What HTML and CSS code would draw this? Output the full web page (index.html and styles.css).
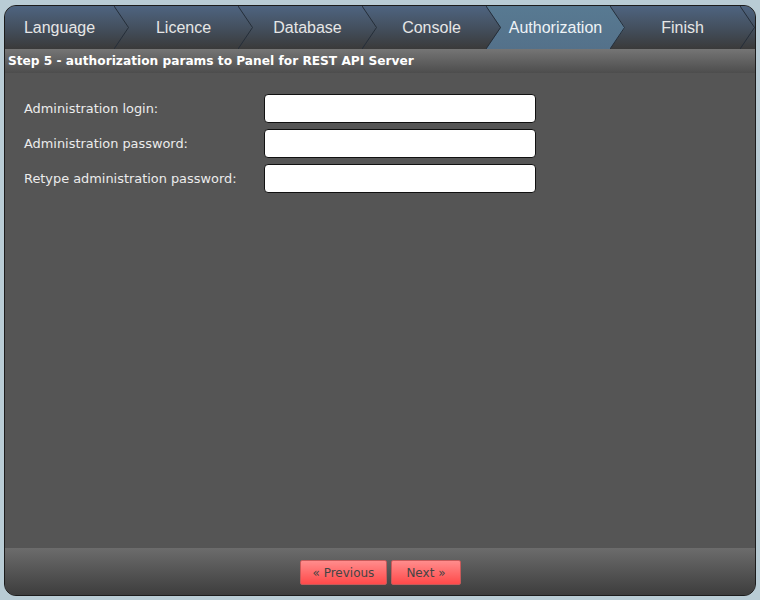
FILE: index.html
```html
<!DOCTYPE html>
<html>
<head>
  <title>Installer - Authorization</title>
  <link rel="stylesheet" href="styles.css">
</head>
<body>

<div class="wizard">
  <ul class="steps">
    <li class="step first"><span>Language</span><svg class="chev" viewBox="0 0 15 43" preserveAspectRatio="none"><polyline points="0,0 14.5,21.5 0,43"/></svg></li>
    <li class="step"><span>Licence</span><svg class="chev" viewBox="0 0 15 43" preserveAspectRatio="none"><polyline points="0,0 14.5,21.5 0,43"/></svg></li>
    <li class="step"><span>Database</span><svg class="chev" viewBox="0 0 15 43" preserveAspectRatio="none"><polyline points="0,0 14.5,21.5 0,43"/></svg></li>
    <li class="step"><span>Console</span><svg class="chev" viewBox="0 0 15 43" preserveAspectRatio="none"><polyline points="0,0 14.5,21.5 0,43"/></svg></li>
    <li class="step active"><span>Authorization</span><svg class="chev" viewBox="0 0 15 43" preserveAspectRatio="none"><polyline points="0,0 14.5,21.5 0,43"/></svg></li>
    <li class="step last"><span>Finish</span><svg class="chev" viewBox="0 0 15 43" preserveAspectRatio="none"><polyline points="0,0 14.5,21.5 0,43"/></svg></li>
  </ul>

  <div class="title">Step 5 - authorization params to Panel for REST API Server</div>

  <div class="content">
    <form class="form-grid">
      <label for="login" class="form-label">Administration login:</label>
      <input type="text" id="login" class="form-input">
      <label for="pass" class="form-label">Administration password:</label>
      <input type="password" id="pass" class="form-input">
      <label for="pass2" class="form-label">Retype administration password:</label>
      <input type="password" id="pass2" class="form-input">
    </form>
  </div>

  <div class="footer">
    <button class="btn">&laquo; Previous</button>
    <button class="btn btn-next">Next &raquo;</button>
  </div>
</div>

</body>
</html>
```

FILE: styles.css
```css
html, body {
  margin: 0;
  height: 100%;
}

body {
  background-color: #b9ccd5;
  padding: 5px 4px 4px;
  box-sizing: border-box;
  font-family: "DejaVu Sans", sans-serif;
}

.wizard {
  height: 591px;
  box-sizing: border-box;
  border: 1px solid #1c1c1c;
  border-radius: 12px;
  overflow: hidden;
  display: flex;
  flex-direction: column;
  background-color: #555555;
}

/* step tabs */
.steps {
  display: flex;
  height: 43px;
  flex-shrink: 0;
  margin: 0;
  padding: 0;
  list-style: none;
  background: linear-gradient(#4e6480, #44505f 50%, #3a3a3a);
}

.step {
  position: relative;
  width: 139px;
  margin-left: -15px;
  padding: 0 15px;
  box-sizing: border-box;
  display: flex;
  align-items: center;
  justify-content: center;
  color: #e6e6e6;
  font-family: "Liberation Sans", Arial, sans-serif;
  font-size: 16px;
}

.step span {
  position: relative;
  z-index: 1;
}

.step.first {
  width: 124px;
  margin-left: 0;
  padding-left: 0;
}

.step.last {
  flex: 1;
}

.step.active {
  color: #eef3f6;
}

.step.active::before {
  content: "";
  position: absolute;
  top: 0;
  left: 0;
  right: 0;
  bottom: 0;
  background: linear-gradient(#587a92, #54718a);
  clip-path: polygon(0 0, calc(100% - 15px) 0, 100% 50%, calc(100% - 15px) 100%, 0 100%, 15px 50%);
}

.chev {
  position: absolute;
  top: 0;
  right: 0;
  width: 15px;
  height: 100%;
  z-index: 2;
}

.chev polyline {
  fill: none;
  stroke: #252e39;
  stroke-width: 1;
  vector-effect: non-scaling-stroke;
}

/* title bar */
.title {
  height: 24px;
  flex-shrink: 0;
  line-height: 24px;
  padding-left: 3px;
  background: linear-gradient(#757575, #4d4d4d);
  color: #fff;
  font-size: 12.2px;
  font-weight: bold;
}

/* form */
.content {
  flex: 1;
  padding: 21px 19px;
  background-color: #555555;
}

.form-grid {
  display: grid;
  grid-template-columns: 240px 272px;
  row-gap: 6px;
  align-items: center;
  margin: 0;
}

.form-label {
  color: #ececec;
  font-size: 12.9px;
}

.form-input {
  height: 29px;
  box-sizing: border-box;
  margin: 0;
  padding: 2px 6px;
  border: 1px solid #111;
  border-radius: 4px;
  background-color: #fff;
}

/* footer */
.footer {
  height: 47px;
  flex-shrink: 0;
  box-sizing: border-box;
  padding-top: 12px;
  display: flex;
  justify-content: center;
  align-items: flex-start;
  gap: 4px;
  background: linear-gradient(#6c6c6c, #3d3d3d);
}

.btn {
  height: 25px;
  padding: 0 12px;
  border: 1px solid #c75a5a;
  border-radius: 2px;
  background: linear-gradient(#ff8c8c, #ff4a4a);
  color: #444;
  font-family: "DejaVu Sans", sans-serif;
  font-size: 12px;
  cursor: pointer;
}

.btn-next {
  padding: 0 14px;
}
```
